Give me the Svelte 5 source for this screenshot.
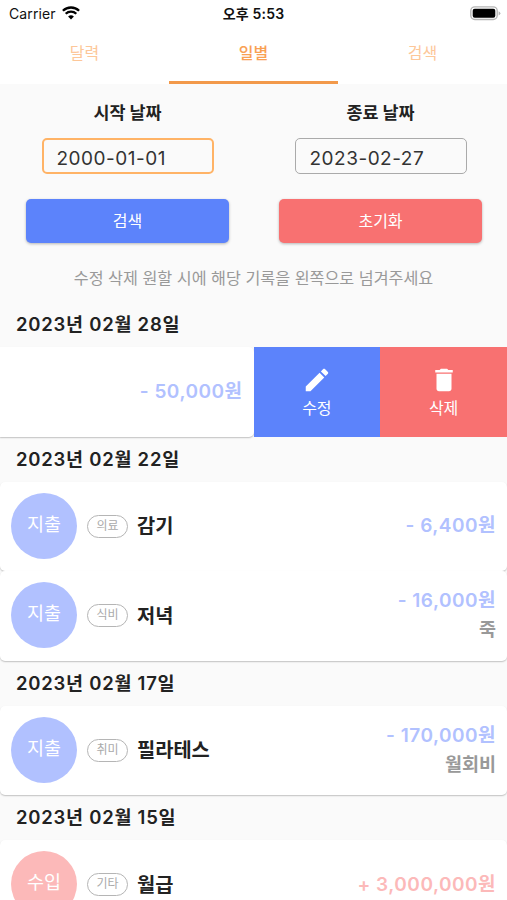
<script>
  const tabs = ['달력', '일별', '검색'];
  let activeTab = $state('일별');

  let startDate = $state('2000-01-01');
  let endDate = $state('2023-02-27');

  const days = [
    {
      date: '2023년 02월 28일',
      records: [{ type: 'expense', amount: '50,000', swiped: true }],
    },
    {
      date: '2023년 02월 22일',
      records: [
        { type: 'expense', category: '의료', title: '감기', amount: '6,400' },
        { type: 'expense', category: '식비', title: '저녁', amount: '16,000', memo: '죽' },
      ],
    },
    {
      date: '2023년 02월 17일',
      records: [
        { type: 'expense', category: '취미', title: '필라테스', amount: '170,000', memo: '월회비' },
      ],
    },
    {
      date: '2023년 02월 15일',
      records: [{ type: 'income', category: '기타', title: '월급', amount: '3,000,000' }],
    },
  ];

  function reset() {
    startDate = '2000-01-01';
    endDate = '2023-02-27';
  }
</script>

<div class="screen">
  <div class="status-bar">
    <div class="carrier">
      <span>Carrier</span>
      <svg width="18" height="14" viewBox="0 0 18 14">
        <path d="M0.9 4.8 A11.6 11.6 0 0 1 17.1 4.8" />
        <path d="M3.7 7.7 A7.6 7.6 0 0 1 14.3 7.7" />
        <path class="dot" d="M9 13.6 L6.1 10.6 A4.1 4.1 0 0 1 11.9 10.6 Z" />
      </svg>
    </div>
    <span class="clock">오후 5:53</span>
    <div class="battery-wrap">
      <svg width="31" height="15" viewBox="0 0 31 15">
        <rect x="0.8" y="0.9" width="26.4" height="12.6" rx="4" fill="#fff" stroke="#b5b5b5" stroke-width="1.4" />
        <rect x="2.7" y="2.7" width="22.6" height="9" rx="2" fill="#000" />
        <path d="M28.6 5.2 Q30.4 6 30.4 7.3 Q30.4 8.6 28.6 9.4 Z" fill="#b5b5b5" />
      </svg>
    </div>
  </div>

  <nav class="tabs">
    {#each tabs as tab}
      <button class="tab" class:active={tab === activeTab} onclick={() => (activeTab = tab)}>
        {tab}
      </button>
    {/each}
  </nav>

  <section class="filters">
    <div class="filter">
      <label for="start">시작 날짜</label>
      <input id="start" class="focused" type="text" bind:value={startDate} />
      <button class="btn search">검색</button>
    </div>
    <div class="filter">
      <label for="end">종료 날짜</label>
      <input id="end" type="text" bind:value={endDate} />
      <button class="btn reset" onclick={reset}>초기화</button>
    </div>
  </section>

  <p class="hint">수정 삭제 원할 시에 해당 기록을 왼쪽으로 넘겨주세요</p>

  {#each days as day}
    <h2 class="date">{day.date}</h2>
    {#each day.records as record}
      <div class="row">
        <div class="card {record.type}" class:swiped={record.swiped}>
          {#if !record.swiped}
            <div class="badge">{record.type === 'income' ? '수입' : '지출'}</div>
            <div class="category">{record.category}</div>
            <div class="title">{record.title}</div>
          {/if}
          <div class="values">
            <div class="amount">{record.type === 'income' ? '+' : '-'} {record.amount}원</div>
            {#if record.memo}
              <div class="memo">{record.memo}</div>
            {/if}
          </div>
        </div>
        {#if record.swiped}
          <button class="action edit">
            <svg width="30" height="30" viewBox="0 0 24 24">
              <path d="M3 17.25V21h3.75L17.81 9.94l-3.75-3.75L3 17.25zM20.71 7.04c.39-.39.39-1.02 0-1.41l-2.34-2.34c-.39-.39-1.02-.39-1.41 0l-1.83 1.83 3.75 3.75 1.83-1.83z" />
            </svg>
            <span>수정</span>
          </button>
          <button class="action delete">
            <svg width="30" height="30" viewBox="0 0 24 24">
              <path d="M6 19c0 1.1.9 2 2 2h8c1.1 0 2-.9 2-2V7H6v12zM19 4h-3.5l-1-1h-5l-1 1H5v2h14V4z" />
            </svg>
            <span>삭제</span>
          </button>
        {/if}
      </div>
    {/each}
  {/each}
</div>

<style>
  :global(body) { background: #fafafa; overflow: hidden; }

  .screen {
    width: 507px; height: 900px;
    overflow: hidden;
    background: #fafafa;
    color: #222;
    font-family: Inter, "Noto Sans CJK KR", sans-serif;
  }
  button {
    border: none; margin: 0; padding: 0;
    font-family: inherit; cursor: pointer;
  }

  .status-bar {
    display: grid; grid-template-columns: 1fr auto 1fr; align-items: center;
    height: 28px; padding: 0 6px 0 9px;
    box-sizing: border-box;
    background: #fff; color: #111;
    font-size: 14px; line-height: 28px;
  }
  .carrier { display: flex; align-items: center; gap: 6px; letter-spacing: 0.1px; }
  .carrier svg { margin-top: -2px; fill: none; stroke: #000; stroke-width: 2.3; }
  .carrier .dot { fill: #000; stroke: none; }
  .clock { margin-right: 3px; font-weight: 600; letter-spacing: 0.2px; }
  .battery-wrap { display: flex; justify-content: flex-end; margin-top: -2px; }

  .tabs { display: grid; grid-template-columns: repeat(3, 1fr); height: 56px; background: #fff; }
  .tab {
    padding-bottom: 5px;
    border-bottom: 3px solid transparent;
    background: none;
    color: #fdc799;
    font-size: 16px;
  }
  .tab.active { color: #f9a153; border-color: #f2994a; font-weight: 500; }

  .filters {
    display: grid; grid-template-columns: 1fr 1fr;
    box-sizing: border-box;
    height: 159px; padding-left: 1px;
  }
  .filter { display: flex; flex-direction: column; align-items: center; }
  label {
    margin-top: 16px; height: 26px;
    font-size: 17.4px; font-weight: 700; line-height: 26px;
  }
  input {
    box-sizing: border-box;
    width: 172px; height: 36px;
    margin: 12px 0 25px; padding: 4px 0 0 14px;
    border: 1px solid #aaa; border-radius: 5px;
    background: transparent;
    font-family: inherit; font-size: 19px; letter-spacing: 0.5px; color: #333;
    outline: none;
  }
  input.focused { padding-left: 13px; border: 2px solid #ffb366; }
  .btn {
    width: 203px; height: 44px; padding-bottom: 2px;
    border-radius: 5px;
    box-shadow: 0 1px 3px rgba(0, 0, 0, 0.28);
    color: #fff; font-size: 16px;
  }
  .search, .edit { background: #5c83fb; }
  .reset, .delete { background: #f87171; }

  .hint {
    height: 59px; margin: 0; padding-top: 22px;
    box-sizing: border-box;
    color: #999; text-align: center;
    font-size: 16.2px; line-height: 26px;
  }

  .date {
    box-sizing: border-box;
    height: 45px; margin: 0; padding-left: 16px;
    font-size: 18.5px; font-weight: 600; letter-spacing: 0.75px; line-height: 44px;
  }

  .row { display: flex; height: 89.5px; }
  .card {
    display: flex; align-items: center;
    box-sizing: border-box;
    width: 100%; padding: 0 11px 1px;
    border-radius: 5px;
    background: #fff;
    box-shadow: 0 1px 1.5px rgba(0, 0, 0, 0.23);
  }
  .card.swiped { width: 50%; border-radius: 0 5px 5px 0; }
  .badge {
    width: 66px; height: 66px;
    border-radius: 50%;
    background: #b1c1ff;
    color: #fff; font-size: 18.5px; line-height: 63px; text-align: center;
  }
  .income .badge { background: #fcb9b9; }
  .category {
    box-sizing: border-box;
    width: 41px; height: 23px; margin: 1px 9px 0 10px;
    border: 1.5px solid #b5b5b5; border-radius: 12px;
    color: #aaa; font-size: 12px; line-height: 19px; text-align: center;
  }
  .title { padding-bottom: 2px; font-size: 19.8px; font-weight: 600; }
  .values { margin-left: auto; text-align: right; font-weight: 600; }
  .amount { color: #b1c1ff; font-size: 19px; letter-spacing: 0.5px; line-height: 29px; }
  .income .amount { color: #fcb9b9; }
  .memo { color: #999; font-size: 18.5px; line-height: 29px; }

  .action {
    display: flex; flex-direction: column; align-items: center;
    width: 25%; padding-top: 18px;
    color: #fff; font-size: 16px; line-height: 27px;
  }
  .action svg { fill: #fff; }
</style>
